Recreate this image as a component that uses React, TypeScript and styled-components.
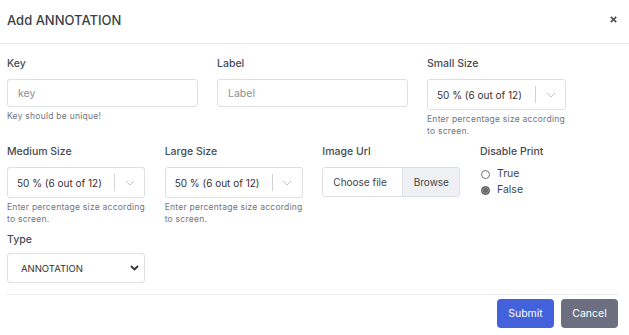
import React from "react";
import styled, { createGlobalStyle } from "styled-components";

const Global = createGlobalStyle`
  html, body { margin: 0; padding: 0; background: #ffffff; }
  body { font-family: Inter, "Open Sans", "Liberation Sans", sans-serif; color: #343a40; }
  * { box-sizing: border-box; }
`;

const Modal = styled.div`
  width: 629px;
  height: 335px;
  background: #fff;
  display: flex;
  flex-direction: column;
`;

const Header = styled.div`
  height: 44px;
  display: flex;
  align-items: center;
  justify-content: space-between;
  padding: 0 12px 4px 7px;
  border-bottom: 1px solid #e9ebef;
`;

const Title = styled.h5`
  margin: 0;
  font-size: 13px;
  font-weight: 500;
  color: #3a3f45;
`;

const Close = styled.button`
  border: none;
  background: none;
  padding: 0;
  display: flex;
  cursor: pointer;
`;

const Body = styled.div`
  padding: 13px 11px 0 7px;
  display: flex;
  flex-direction: column;
  gap: 8px;
`;

const Row = styled.div<{ $cols: number }>`
  display: grid;
  grid-template-columns: repeat(${(p) => p.$cols}, minmax(0, 1fr));
  column-gap: ${(p) => (p.$cols === 3 ? 19 : 19.67)}px;
`;

const Field = styled.div`
  display: flex;
  flex-direction: column;
  align-items: flex-start;
  min-width: 0;
`;

const Label = styled.label<{ $tight?: boolean }>`
  font-size: 10.5px;
  font-weight: 500;
  line-height: 14px;
  color: #464b51;
  margin-bottom: ${(p) => (p.$tight ? 6 : 8)}px;
`;

const TextInput = styled.input`
  width: 100%;
  height: 28px;
  border: 1px solid #dcdfe3;
  border-radius: 3px;
  padding: 0 10px;
  font-family: inherit;
  font-size: 10.5px;
  color: #495057;
  &::placeholder { color: #8a9099; }
`;

const Help = styled.div`
  font-size: 8.5px;
  letter-spacing: 0.25px;
  line-height: 12px;
  color: #70757e;
  margin-top: 3px;
  max-width: 138px;
`;

const SelectBox = styled.div`
  width: 139px;
  max-width: 100%;
  height: 31px;
  border: 1px solid #dcdfe3;
  border-radius: 3px;
  display: flex;
  align-items: center;
  padding-left: 9px;
  font-size: 10px;
  color: #333;
`;

const SelectValue = styled.span`
  flex: 1;
  white-space: nowrap;
`;

const Sep = styled.span`
  width: 1px;
  height: 17px;
  background: #cfd2d6;
`;

const Chevron = styled.span`
  width: 29px;
  display: flex;
  justify-content: center;
`;

const FileBox = styled.div`
  width: 100%;
  height: 30px;
  border: 1px solid #dcdfe3;
  border-radius: 3px;
  display: flex;
  font-size: 10px;
  color: #40454b;
  overflow: hidden;
`;

const FileText = styled.span`
  flex: 1;
  display: flex;
  align-items: center;
  padding-left: 10px;
`;

const Browse = styled.span`
  width: 57px;
  display: flex;
  align-items: center;
  justify-content: center;
  background: #eef0f4;
  border-left: 1px solid #dcdfe3;
`;

const RadioList = styled.div`
  display: flex;
  flex-direction: column;
  gap: 2px;
`;

const RadioRow = styled.label`
  display: flex;
  align-items: center;
  gap: 7px;
  font-size: 10.5px;
  line-height: 14px;
  color: #40454b;
  padding-left: 1px;
`;

const RadioDot = styled.span<{ $checked?: boolean }>`
  width: 9px;
  height: 9px;
  border-radius: 50%;
  border: 1px solid ${(p) => (p.$checked ? "#555" : "#6d7279")};
  background: ${(p) => (p.$checked ? "#6a6a6a" : "#fff")};
  box-shadow: ${(p) => (p.$checked ? "inset 0 0 0 1px #9a9a9a" : "none")};
`;

const NativeWrap = styled.div`
  position: relative;
  width: 100%;
  height: 30px;
`;

const NativeSelect = styled.select`
  appearance: none;
  width: 100%;
  height: 100%;
  border: 1px solid #dcdfe3;
  border-radius: 3px;
  background: #fff;
  padding: 0 0 0 13px;
  font-family: inherit;
  font-size: 9.5px;
  color: #333;
`;

const SelectArrow = styled.span`
  position: absolute;
  right: 6px;
  top: 12px;
  display: flex;
  pointer-events: none;
`;

const Footer = styled.div`
  margin: 11px 11px 0 7px;
  border-top: 1px solid #e9ebef;
  padding-top: 4px;
  display: flex;
  justify-content: flex-end;
  gap: 7px;
`;

const Button = styled.button<{ $variant: "primary" | "secondary" }>`
  width: 57px;
  height: 29px;
  border: none;
  border-radius: 4px;
  font-family: inherit;
  font-size: 10.5px;
  color: #fff;
  background: ${(p) => (p.$variant === "primary" ? "#4361da" : "#6b6f80")};
`;

const ChevronDown = () => (
  <svg width="10" height="6" viewBox="0 0 10 6">
    <path d="M1 1l4 4 4-4" fill="none" stroke="#c4c7cc" strokeWidth="1" />
  </svg>
);

const SizeSelect = () => (
  <>
    <SelectBox>
      <SelectValue>50 % (6 out of 12)</SelectValue>
      <Sep />
      <Chevron>
        <ChevronDown />
      </Chevron>
    </SelectBox>
    <Help>Enter percentage size according to screen.</Help>
  </>
);

export default function App() {
  return (
    <>
      <Global />
      <Modal>
        <Header>
          <Title>Add ANNOTATION</Title>
          <Close aria-label="close">
            <svg width="7" height="7" viewBox="0 0 7 7">
              <path d="M0.8 0.8l5.4 5.4M6.2 0.8L0.8 6.2" stroke="#555" strokeWidth="1.8" />
            </svg>
          </Close>
        </Header>
        <Body>
          <Row $cols={3}>
            <Field>
              <Label>Key</Label>
              <TextInput placeholder="key" />
              <Help>Key should be unique!</Help>
            </Field>
            <Field>
              <Label>Label</Label>
              <TextInput placeholder="Label" />
            </Field>
            <Field>
              <Label>Small Size</Label>
              <SizeSelect />
            </Field>
          </Row>
          <Row $cols={4}>
            <Field>
              <Label>Medium Size</Label>
              <SizeSelect />
            </Field>
            <Field>
              <Label>Large Size</Label>
              <SizeSelect />
            </Field>
            <Field>
              <Label>Image Url</Label>
              <FileBox>
                <FileText>Choose file</FileText>
                <Browse>Browse</Browse>
              </FileBox>
            </Field>
            <Field>
              <Label>Disable Print</Label>
              <RadioList>
                <RadioRow>
                  <RadioDot />
                  True
                </RadioRow>
                <RadioRow>
                  <RadioDot $checked />
                  False
                </RadioRow>
              </RadioList>
            </Field>
          </Row>
          <Row $cols={4}>
            <Field>
              <Label $tight>Type</Label>
              <NativeWrap>
                <NativeSelect defaultValue="ANNOTATION">
                  <option>ANNOTATION</option>
                </NativeSelect>
                <SelectArrow>
                  <svg width="9" height="6" viewBox="0 0 9 6">
                    <path d="M1 1l3.5 3.5L8 1" fill="none" stroke="#333" strokeWidth="1.8" />
                  </svg>
                </SelectArrow>
              </NativeWrap>
            </Field>
          </Row>
        </Body>
        <Footer>
          <Button $variant="primary">Submit</Button>
          <Button $variant="secondary">Cancel</Button>
        </Footer>
      </Modal>
    </>
  );
}
